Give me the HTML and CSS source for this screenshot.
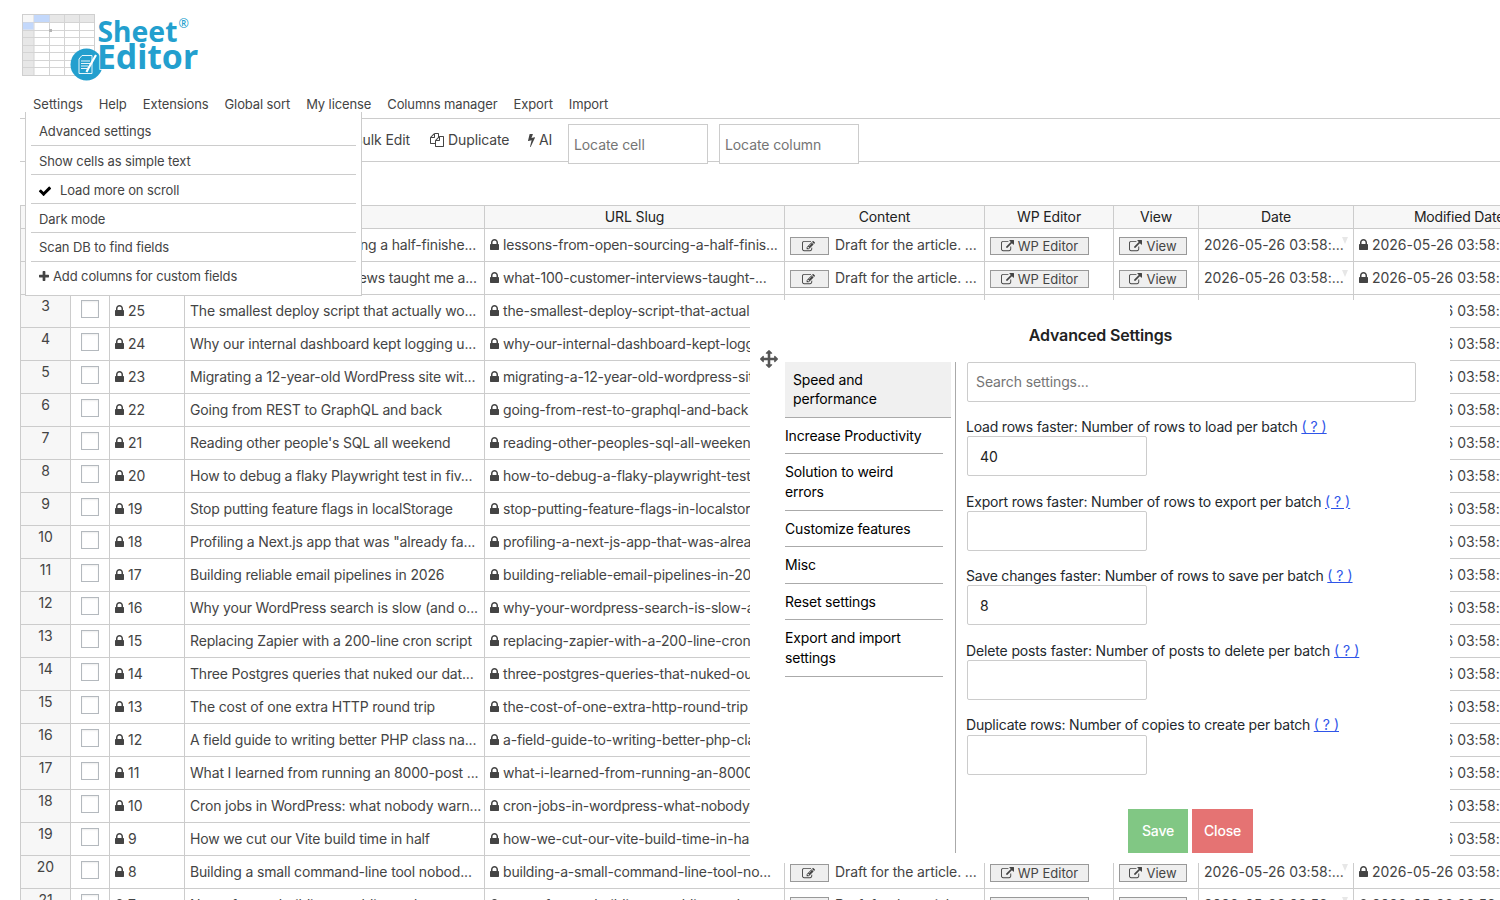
FILE: index.html
```html
<!DOCTYPE html>
<html lang="en">
<head>
<meta charset="utf-8">
<title>Sheet Editor</title>
<link rel="stylesheet" href="styles.css">
</head>
<body>
<svg class="sprite" aria-hidden="true">
  <symbol id="lock" viewBox="0 0 1152 1792"><path d="M320 768h512v-192q0-106-75-181t-181-75-181 75-75 181v192zm832 96v576q0 40-28 68t-68 28h-960q-40 0-68-28t-28-68v-576q0-40 28-68t68-28h32v-192q0-184 132-316t316-132 316 132 132 316v192h32q40 0 68 28t28 68z"/></symbol>
  <symbol id="link" viewBox="0 0 1792 1792"><path d="M1408 928v320q0 119-84.5 203.5t-203.5 84.5h-832q-119 0-203.500-84.500t-84.500-203.500v-832q0-119 84.500-203.500t203.500-84.500h704q14 0 23 9t9 23v64q0 14-9 23t-23 9h-704q-66 0-113 47t-47 113v832q0 66 47 113t113 47h832q66 0 113-47t47-113v-320q0-14 9-23t23-9h64q14 0 23 9t9 23zm384-864v512q0 26-19 45t-45 19-45-19l-176-176-652 652q-10 10-23 10t-23-10l-114-114q-10-10-10-23t10-23l652-652-176-176q-19-19-19-45t19-45 45-19h512q26 0 45 19t19 45z"/></symbol>
  <symbol id="edit" viewBox="0 0 1792 1792"><path d="M888 1184l116-116-152-152-116 116v56h96v96h56zm440-720q-16-16-33 1l-350 350q-17 17-1 33t33-1l350-350q17-17 1-33zm80 594v190q0 119-84.500 203.500t-203.500 84.500h-832q-119 0-203.500-84.500t-84.500-203.500v-832q0-119 84.500-203.500t203.500-84.500h832q63 0 117 25 15 7 18 23 3 17-9 29l-49 49q-14 14-32 8-23-6-45-6h-832q-66 0-113 47t-47 113v832q0 66 47 113t113 47h832q66 0 113-47t47-113v-126q0-13 9-22l64-64q15-15 35-7t20 29zm-96-738l288 288-672 672h-288v-288zm444 132l-92 92-288-288 92-92q28-28 68-28t68 28l152 152q28 28 28 68t-28 68z"/></symbol>
  <symbol id="bolt" viewBox="448 0 896 1792"><path d="M1333 566q18 20 7 44l-540 1157q-13 25-42 25-4 0-14-2-17-5-25.500-19t-4.500-30l197-808-406 101q-4 1-12 1-18 0-31-11-18-15-13-39l201-825q4-14 16-23t28-9h328q19 0 32 12.500t13 29.500q0 8-5 18l-171 463 396-98q8-2 12-2 19 0 34 15z"/></symbol>
  <symbol id="plus" viewBox="192 0 1408 1792"><path d="M1600 736v192q0 40-28 68t-68 28h-416v416q0 40-28 68t-68 28h-192q-40 0-68-28t-28-68v-416h-416q-40 0-68-28t-28-68v-192q0-40 28-68t68-28h416v-416q0-40 28-68t68-28h192q40 0 68 28t28 68v416h416q40 0 68 28t28 68z"/></symbol>
  <symbol id="check" viewBox="0 0 1792 1792"><path d="M1671 566q0 40-28 68l-724 724-136 136q-28 28-68 28t-68-28l-136-136-362-362q-28-28-28-68t28-68l136-136q28-28 68-28t68 28l294 295 656-657q28-28 68-28t68 28l136 136q28 28 28 68z"/></symbol>
  <symbol id="arrows" viewBox="0 0 1792 1792"><path d="M1792 896q0 26-19 45l-256 256q-19 19-45 19t-45-19-19-45v-128h-384v384h128q26 0 45 19t19 45-19 45l-256 256q-19 19-45 19t-45-19l-256-256q-19-19-19-45t19-45 45-19h128v-384h-384v128q0 26-19 45t-45 19-45-19l-256-256q-19-19-19-45t19-45l256-256q19-19 45-19t45 19 19 45v128h384v-384h-128q-26 0-45-19t-19-45 19-45l256-256q19-19 45-19t45 19l256 256q19 19 19 45t-19 45-45 19h-128v384h384v-128q0-26 19-45t45-19 45 19l256 256q19 19 19 45z"/></symbol>
  <symbol id="files" viewBox="0 0 1792 1792"><path d="M1696 384q40 0 68 28t28 68v1216q0 40-28 68t-68 28h-960q-40 0-68-28t-28-68v-288h-544q-40 0-68-28t-28-68v-672q0-40 20-88t48-76l408-408q28-28 76-48t88-20h416q40 0 68 28t28 68v328q68-40 128-40h416zm-544 213l-299 299h299v-299zm-640-384l-299 299h299v-299zm196 647l316-316v-416h-384v416q0 40-28 68t-68 28h-416v640h512v-256q0-40 20-88t48-76zm956 804v-1152h-384v416q0 40-28 68t-68 28h-416v640h896z"/></symbol>
</svg>

<header class="brand">
  <svg class="logo" width="182" height="72" viewBox="0 0 182 72">
    <rect x="2.500" y="2.500" width="72" height="61" fill="#fff" stroke="#cfcfcf"/>
    <path d="M3 3h71v7H3zM3 10h11v53H3z" fill="#e7e7e7"/>
    <path d="M3 3h11v7H3z" fill="#f7f7f7"/>
    <path d="M14 3v60M29.500 3v60M44.500 3v60M59.500 3v60M3 10.500h71M3 18.500h71M3 25.500h71M3 33.500h71M3 40.500h71M3 48.500h71M3 55.500h71" fill="none" stroke="#d4d4d4"/>
    <path d="M14 3h15.500v7H14zM3 10.500h10.500v7H3z" fill="#c3d8fb"/>
    <path d="M29 17h3v3h-3z" fill="#b5b5b5"/>
    <circle cx="66.500" cy="52.500" r="16" fill="#239fce"/>
    <path d="M59 47l3-3.500h10v18H59z" fill="none" stroke="#e8f6fb" stroke-width="1"/>
    <path d="M61 49h9M61 51.500h9M61 54h7M61 56.500h6" stroke="#e8f6fb" stroke-width="1"/>
    <path d="M76 43L68 57l-1.500 3" fill="none" stroke="#fff" stroke-width="2.200"/>
    <g class="wordmark">
      <text x="77.500" y="29.500" font-size="28.500" textLength="80" lengthAdjust="spacingAndGlyphs">Sheet</text>
      <text class="wordmark-edge" x="77" y="57" font-size="34" textLength="101" lengthAdjust="spacingAndGlyphs">Editor</text>
      <text class="reg" x="158.500" y="15.500" font-size="12.500">®</text>
    </g>
  </svg>
</header>

<nav class="menubar">
  <div class="menu-root">
    <a class="menu-link">Settings</a>
    <ul class="dropdown">
      <li class="tight">Advanced settings</li>
      <li>Show cells as simple text</li>
      <li class="checked"><svg class="icon-check"><use href="#check"/></svg>Load more on scroll</li>
      <li>Dark mode</li>
      <li class="tight">Scan DB to find fields</li>
      <li class="last"><svg class="icon-plus"><use href="#plus"/></svg>Add columns for custom fields</li>
    </ul>
  </div>
  <a class="menu-link">Help</a>
  <a class="menu-link">Extensions</a>
  <a class="menu-link">Global sort</a>
  <a class="menu-link">My license</a>
  <a class="menu-link">Columns manager</a>
  <a class="menu-link">Export</a>
  <a class="menu-link">Import</a>
</nav>

<section class="toolbar">
  <a class="tool tool-bulk">Bulk Edit</a>
  <a class="tool tool-duplicate"><svg class="icon14"><use href="#files"/></svg>Duplicate</a>
  <a class="tool tool-ai"><svg class="icon-bolt"><use href="#bolt"/></svg>AI</a>
  <input class="locate" type="text" placeholder="Locate cell">
  <input class="locate" type="text" placeholder="Locate column">
</section>

<main class="sheet" id="sheet">
  <div class="row head">
    <div></div><div></div><div>ID</div><div>Title</div><div>URL Slug</div><div>Content</div><div>WP Editor</div><div>View</div><div>Date</div><div class="h-mod">Modified Date</div>
  </div>
</main>

<div class="modal">
  <h2 class="modal-title">Advanced Settings</h2>
  <div class="modal-body">
    <svg class="move"><use href="#arrows"/></svg>
    <ul class="tabs">
      <li class="active">Speed and<br>performance</li>
      <li>Increase Productivity</li>
      <li>Solution to weird<br>errors</li>
      <li>Customize features</li>
      <li>Misc</li>
      <li>Reset settings</li>
      <li>Export and import<br>settings</li>
    </ul>
    <div class="fields">
      <input class="search" type="text" placeholder="Search settings...">
      <div class="field"><label>Load rows faster: Number of rows to load per batch <a>( ? )</a></label><input type="text" value="40"></div>
      <div class="field"><label>Export rows faster: Number of rows to export per batch <a>( ? )</a></label><input type="text"></div>
      <div class="field"><label>Save changes faster: Number of rows to save per batch <a>( ? )</a></label><input type="text" value="8"></div>
      <div class="field"><label class="wide">Delete posts faster: Number of posts to delete per batch <a>( ? )</a></label><input type="text"></div>
      <div class="field"><label>Duplicate rows: Number of copies to create per batch <a>( ? )</a></label><input type="text"></div>
      <div class="actions"><button class="save">Save</button><button class="close">Close</button></div>
    </div>
  </div>
</div>
<script src="rows.js"></script>
</body>
</html>
```

FILE: styles.css
```css
* { box-sizing: border-box; }
html, body { height: 900px; overflow: hidden; }
body { margin: 0; background: #fff; color: #444; font-family: Inter, "Liberation Sans", sans-serif; font-size: 14px; position: relative; }
ul { list-style: none; margin: 0; padding: 0; }
input, button { font-family: inherit; letter-spacing: inherit; }
svg { fill: currentColor; flex: none; }
.sprite { position: absolute; width: 0; height: 0; }

.brand { height: 94px; padding: 12px 0 0 20px; }
.logo { display: block; }
.wordmark { font-family: "Noto Sans", "Open Sans", sans-serif; font-weight: 700; fill: #239fce; }
.wordmark-edge { stroke: #fff; stroke-width: 1.5px; paint-order: stroke; }
.reg { font-weight: 400; }

.menubar { display: flex; gap: 16px; height: 24px; padding-left: 33px; font-size: 13px; line-height: 21px; letter-spacing: -0.11px; }
.menu-root { position: relative; }
.menu-root > .menu-link { letter-spacing: 0; }
.menu-link { display: block; white-space: nowrap; }
.dropdown { position: absolute; z-index: 5; left: -8px; top: 18px; width: 337px; height: 184px; padding: 5px 5px 0; background: #fff; border: 1px solid #ccc; border-top: 0; }
.dropdown li { display: flex; align-items: center; height: 29px; padding: 2px 8px 0; border-bottom: 1px solid #ccc; white-space: nowrap; }
.dropdown li.tight { padding-top: 0; }
.dropdown li.last { border: 0; padding-top: 0; }
.icon-check { width: 14px; height: 14px; margin: 1px 8px 0 -1px; color: #000; }
.icon-plus { width: 10px; height: 13px; margin-right: 4px; }

.toolbar { display: flex; align-items: flex-start; height: 44px; margin-left: 20px; padding: 5px 0 0 332px; border-top: 1px solid #ccc; border-bottom: 1px solid #ccc; letter-spacing: -0.1px; }
.tool { display: flex; align-items: center; height: 31px; margin-right: 20px; white-space: nowrap; }
.tool-bulk { width: 58px; justify-content: flex-end; }
.tool-duplicate { width: 79px; margin-right: 19px; }
.tool-ai { width: 25px; margin-right: 15px; }
.icon14 { width: 14px; height: 14px; margin-right: 4px; }
.icon-bolt { width: 7px; height: 14px; margin-right: 4px; }
.locate { width: 140px; height: 40px; margin-right: 11px; padding: 0 5px; border: 1px solid #ccc; font-size: 14px; background: #fff; flex: none; }
input::placeholder { color: #757575; opacity: 1; }

.sheet { width: 1544px; margin: 43px 0 0 20px; border: 1px solid #ccc; }
.row { display: grid; grid-template-columns: 50px 39px 75px 300px 300px 200px 129px 85px 155px 210px; height: 33px; }
.row > div { position: relative; display: flex; align-items: center; padding: 0 0 1px 5px; border-right: 1px solid #ccc; border-bottom: 1px solid #ccc; white-space: nowrap; overflow: hidden; line-height: 16px; }
.row.head { height: 23px; letter-spacing: -0.12px; }
.row.head > div { justify-content: center; padding: 0 0 1px; background: #f7f7f7; color: #222; }
.row.head > .h-mod { letter-spacing: -0.2px; padding-left: 1px; }
.row > .num { justify-content: center; align-items: flex-start; padding: 2px 0 0; background: #f7f7f7; line-height: 17px; }
.row > .sel { justify-content: center; align-items: flex-start; padding: 5px 0 0; }
.row > .c-title { letter-spacing: -0.17px; }
.row > .c-slug { letter-spacing: -0.19px; }
.row > .c-content { letter-spacing: -0.12px; }
.row > .c-date { letter-spacing: -0.03px; }
.row > .c-btn, .row > .c-content { padding-bottom: 0; }
.c-content > .snippet { padding-bottom: 1px; }
.box { width: 18px; height: 18px; border: 1px solid #b4b9be; background: #fff; box-shadow: inset 0 1px 2px rgba(0,0,0,.07); }
.lock { width: 9px; height: 14px; margin: 1px 4px 0 0; }
.btn { display: flex; align-items: center; justify-content: center; gap: 4px; height: 18px; margin: 2px 6px 0 0; border: 1px solid #999; background: #efefef; font-size: 13px; }
.btn svg { width: 13px; height: 13px; }
.btn-edit { width: 39px; padding-right: 3px; }
.btn-wp { width: 99px; }
.btn-view { width: 68px; }
.caret { position: absolute; right: 5px; top: 8px; border: 3.5px solid transparent; border-top: 7px solid #e7e7e7; border-bottom: 0; }

.modal { position: absolute; z-index: 10; left: 750px; top: 300px; width: 700px; height: 563px; background: #fff; padding: 25px 34px 0 35px; }
.modal-title { margin: 0; height: 37px; text-align: center; font-size: 16px; line-height: 21px; font-weight: 600; color: #222; letter-spacing: -0.15px; }
.modal-body { position: relative; display: flex; height: 491px; }
.move { position: absolute; left: -25px; top: -12.500px; width: 18px; height: 18px; color: #555; }
.tabs { width: 171px; border-right: 1px solid #aaa; color: #000; line-height: 19.6px; letter-spacing: -0.16px; }
.tabs li { width: 158px; padding: 8px 0 8px; border-bottom: 1px solid #aaa; }
.tabs li.active { width: 166px; padding: 7.6px 8px 8px; background: #f0f0f0; }
.fields { flex: 1; padding-left: 10px; color: #222; letter-spacing: -0.1px; }
.fields input { display: block; height: 40px; margin-left: 1px; border: 1px solid #ccc; border-radius: 2px; font-size: 14px; color: #222; background: #fff; }
.fields .search { width: 449px; padding: 0 8px 2px; margin-bottom: 15px; }
.field { height: 74.6px; line-height: 19.2px; }
.field label { display: block; height: 19.15px; white-space: nowrap; color: #23282d; letter-spacing: -0.2px; }
.field label.wide { letter-spacing: -0.14px; }
.field a { color: #2f55e8; text-decoration: underline; letter-spacing: 0; }
.fields .field input { width: 180px; padding: 0 12px; }
.actions { display: flex; gap: 4px; padding: 19px 0 0 162px; }
.actions button { height: 44px; padding: 0; border: 0; font-size: 14px; font-weight: 500; color: #fff; letter-spacing: -0.2px; }
.save { width: 60px; background: #81c784; }
.close { width: 61px; background: #e57373; }
```

FILE: rows.js
```js
const posts = [
  [27, 'Lessons from open-sourcing a half-finishe...', 'lessons-from-open-sourcing-a-half-finis...'],
  [26, 'What 100 customer interviews taught me a...', 'what-100-customer-interviews-taught-...'],
  [25, 'The smallest deploy script that actually wo...', 'the-smallest-deploy-script-that-actually...'],
  [24, 'Why our internal dashboard kept logging u...', 'why-our-internal-dashboard-kept-logging...'],
  [23, 'Migrating a 12-year-old WordPress site wit...', 'migrating-a-12-year-old-wordpress-site...'],
  [22, 'Going from REST to GraphQL and back', 'going-from-rest-to-graphql-and-back'],
  [21, "Reading other people's SQL all weekend", 'reading-other-peoples-sql-all-weekend'],
  [20, 'How to debug a flaky Playwright test in fiv...', 'how-to-debug-a-flaky-playwright-test-...'],
  [19, 'Stop putting feature flags in localStorage', 'stop-putting-feature-flags-in-localstorage'],
  [18, 'Profiling a Next.js app that was "already fa...', 'profiling-a-next-js-app-that-was-alread...'],
  [17, 'Building reliable email pipelines in 2026', 'building-reliable-email-pipelines-in-2026'],
  [16, 'Why your WordPress search is slow (and o...', 'why-your-wordpress-search-is-slow-an...'],
  [15, 'Replacing Zapier with a 200-line cron script', 'replacing-zapier-with-a-200-line-cron-...'],
  [14, 'Three Postgres queries that nuked our dat...', 'three-postgres-queries-that-nuked-our-...'],
  [13, 'The cost of one extra HTTP round trip', 'the-cost-of-one-extra-http-round-trip'],
  [12, 'A field guide to writing better PHP class na...', 'a-field-guide-to-writing-better-php-cla...'],
  [11, 'What I learned from running an 8000-post ...', 'what-i-learned-from-running-an-8000-...'],
  [10, 'Cron jobs in WordPress: what nobody warn...', 'cron-jobs-in-wordpress-what-nobody-...'],
  [9, 'How we cut our Vite build time in half', 'how-we-cut-our-vite-build-time-in-half'],
  [8, 'Building a small command-line tool nobod...', 'building-a-small-command-line-tool-no...'],
  [7, 'Notes from rebuilding a public roadmap', 'notes-from-rebuilding-a-public-roadmap']
];
const icon = (name, cls = '') => `<svg class="${cls}"><use href="#${name}"/></svg>`;
const date = '2026-05-26 03:58:';
document.getElementById('sheet').insertAdjacentHTML('beforeend', posts.map(([id, title, slug], i) => `
  <div class="row">
    <div class="num">${i + 1}</div>
    <div class="sel"><span class="box"></span></div>
    <div class="c-id">${icon('lock', 'lock')}<span>${id}</span></div>
    <div class="c-title">${title}</div>
    <div class="c-slug">${icon('lock', 'lock')}<span>${slug}</span></div>
    <div class="c-content"><span class="btn btn-edit">${icon('edit')}</span><span class="snippet">Draft for the article. ...</span></div>
    <div class="c-btn"><span class="btn btn-wp">${icon('link')}WP Editor</span></div>
    <div class="c-btn"><span class="btn btn-view">${icon('link')}View</span></div>
    <div class="c-date">${date}...<i class="caret"></i></div>
    <div class="c-date">${icon('lock', 'lock')}<span>${date}27</span></div>
  </div>`).join(''));
```
